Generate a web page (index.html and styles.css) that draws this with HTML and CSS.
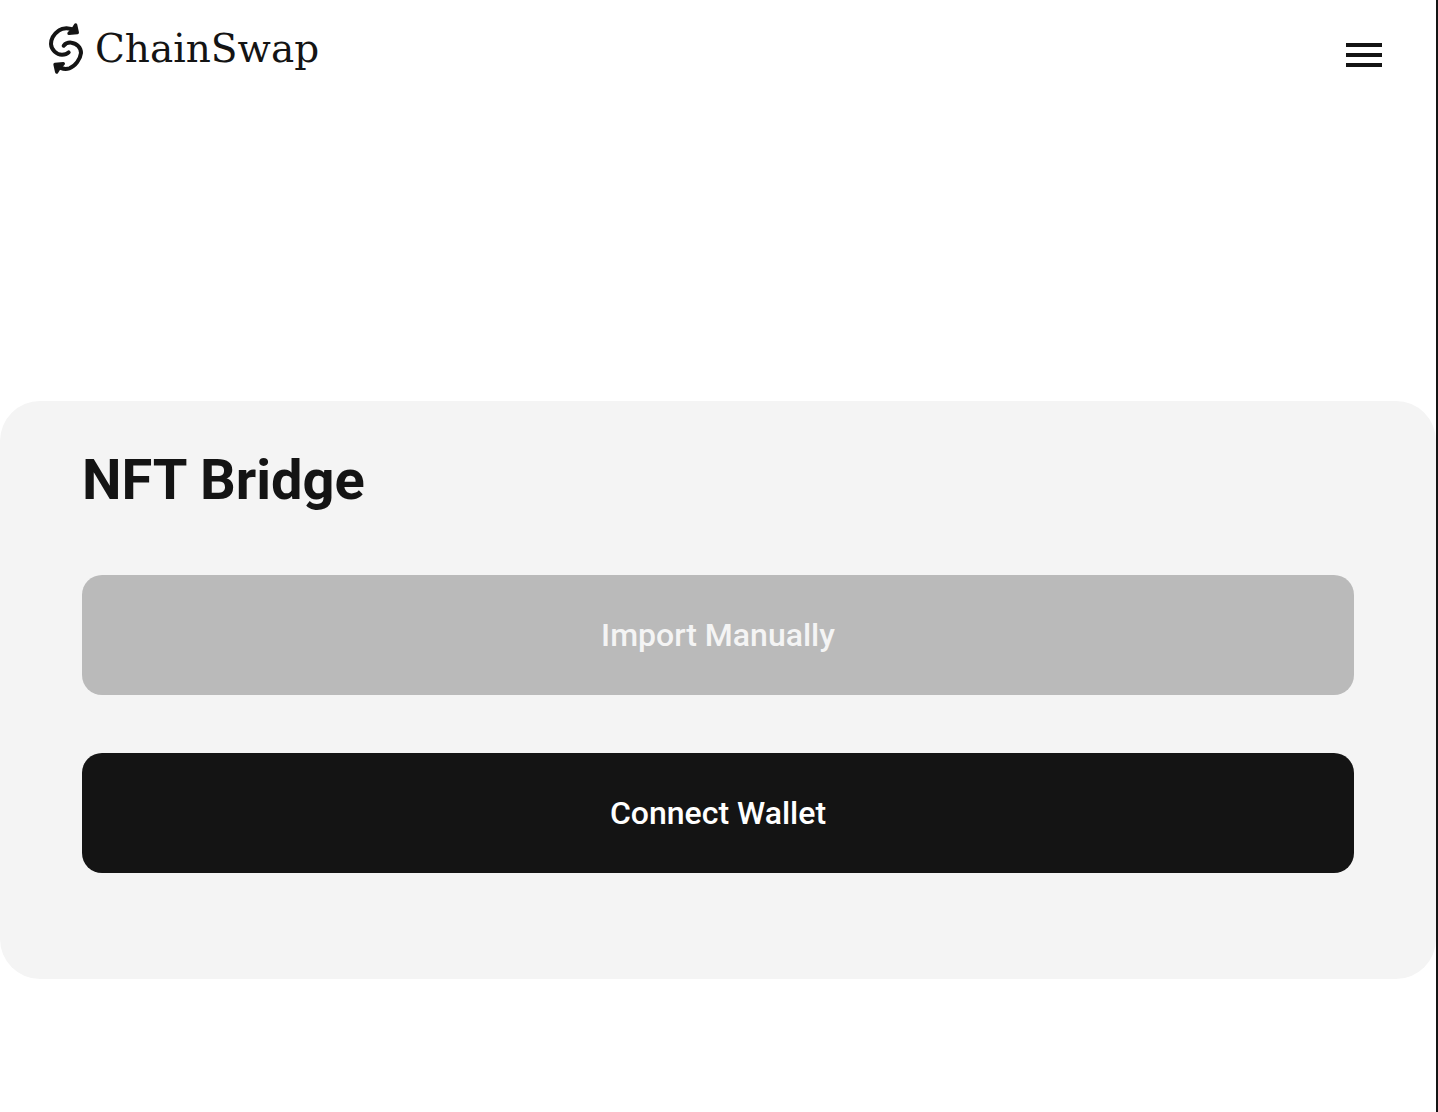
FILE: index.html
```html
<!DOCTYPE html>
<html lang="en">
	<head>
		<meta charset="utf-8">
		<meta name="viewport" content="width=device-width, initial-scale=1">
		<title>ChainSwap</title>
		<link rel="stylesheet" href="styles.css">
	</head>
	<body>
		<header class="header">
			<a class="logo" href="#">
				<svg class="logoIcon" viewBox="27 21 105 159" aria-hidden="true">
					<path d="M104 46 C90 38 69 37 57 46 C43 56 33 72 33 87 C34 105 50 119 66 119 C75 119 81 117 86 112"/>
					<path d="M71 92 C76 86 84 82 94 83 C111 85 123 98 123 114 C121 132 106 154 88 160 C75 164 61 160 50 151"/>
					<path class="logoArrow" d="M107 30 L112 53 L87 55 L100 41 Z"/>
					<path class="logoArrow" d="M50 171 L45 148 L70 146 L57 160 Z"/>
				</svg>
				<span class="logoText">ChainSwap</span>
			</a>
			<button class="menuButton" type="button" aria-label="Menu">
				<span></span>
				<span></span>
				<span></span>
			</button>
		</header>

		<main class="panel">
			<h1 class="title">NFT Bridge</h1>
			<button class="button" type="button" disabled>Import Manually</button>
			<button class="button" type="button">Connect Wallet</button>
		</main>
	</body>
</html>
```

FILE: styles.css
```css
* {
	box-sizing: border-box;
}

body {
	display: flex;
	flex-direction: column;
	min-height: 100vh;
	margin: 0;
	border-right: 2px solid #141414;
	color: #141414;
	background-color: #fff;
	font-family: Roboto, "Liberation Sans", sans-serif;
}

/* header */

.header {
	display: flex;
	align-items: center;
	justify-content: space-between;
	padding: 22px 54px 0 49px;
}

.logo {
	display: flex;
	align-items: center;
	gap: 11px;
	color: inherit;
	text-decoration: none;
}

.logoIcon {
	width: 35px;
	height: 53px;
	fill: none;
	stroke: #141414;
	stroke-width: 12;
	stroke-linecap: round;
	stroke-linejoin: round;
}

.logoArrow {
	fill: #141414;
	stroke-width: 10;
}

.logoText {
	font-family: "DejaVu Serif", serif;
	font-size: 39px;
	line-height: 50px;
}

.menuButton {
	display: flex;
	flex-direction: column;
	gap: 6px;
	margin-top: 12px;
	padding: 0;
	border: 0;
	background: none;
	cursor: pointer;
}
.menuButton span {
	width: 36px;
	height: 4px;
	background-color: #141414;
}

/* bridge panel */

.panel {
	display: flex;
	flex-direction: column;
	gap: 58px;
	margin-top: 326px;
	padding: 46px 82px 106px;
	border-radius: 40px;
	background-color: #f4f4f4;
}

.title {
	margin: 0 0 4px;
	font-size: 56px;
	font-weight: 700;
	line-height: 66px;
}

.button {
	width: 100%;
	height: 120px;
	border: 0;
	border-radius: 20px;
	color: #fff;
	background-color: #141414;
	font-family: inherit;
	font-size: 32px;
	font-weight: 500;
	cursor: pointer;
}
.button:disabled {
	color: #f4f4f4;
	background-color: #bababa;
	cursor: default;
}
```
